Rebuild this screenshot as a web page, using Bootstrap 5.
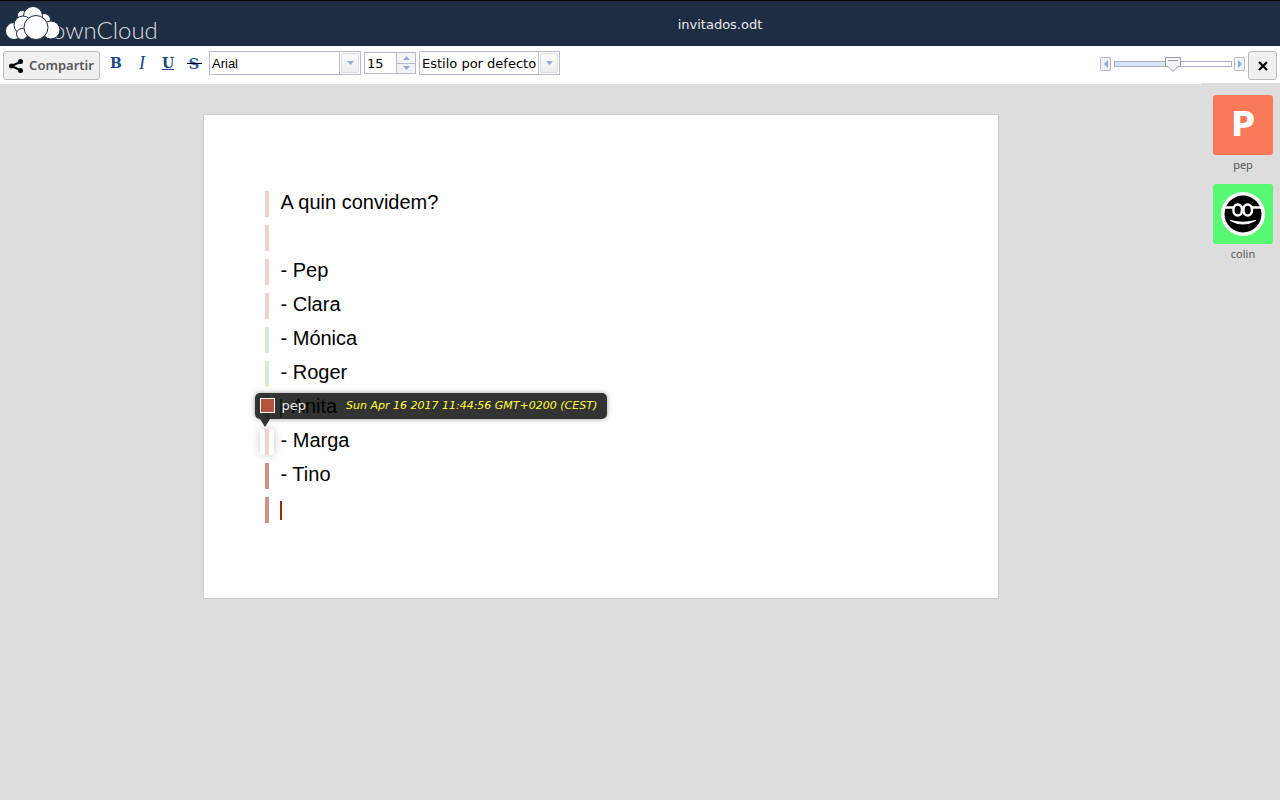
<!DOCTYPE html>
<html lang="es">
<head>
<meta charset="utf-8">
<meta name="viewport" content="width=device-width, initial-scale=1">
<title>invitados.odt</title>
<link href="https://cdn.jsdelivr.net/npm/bootstrap@5.3.0/dist/css/bootstrap.min.css" rel="stylesheet">
<style>
  body { background: #ddd; font-family: "DejaVu Sans", sans-serif; font-size: 13px; color: #000; }
  .topbar { height: 46px; background: #1d2d44; border-top: 1px solid #000; }
  .topbar .brand { width: 200px; padding-left: 4px; }
  .topbar .doc-name { color: #fff; opacity: .9; padding: 2px 40px 0 0; }
  .toolbar { height: 38px; background: #fff; padding: 5px 3px 0; }
  .tool-btn { width: 97px; height: 29px; background: #f0f0f0; border: 1px solid #bbb; border-radius: 3px; color: #555; font: 600 13px/27px "Noto Sans", "Open Sans", sans-serif; padding: 0; display: flex; align-items: center; justify-content: center; gap: 6px; }
  .close-btn { width: 29px; }
  .marks { gap: 2px; margin: 0 3px 0 4px; }
  .mark-btn { width: 24px; height: 24px; padding: 0; border: 0; background: none; color: #1b4587; font: bold 14px/24px "DejaVu Serif", serif; }
  .mark-btn.slanted { font: italic 18px/24px "Liberation Serif", serif; }
  .field { height: 24px; border: 1px solid #b5bcd0; background: #fff; display: flex; position: relative; }
  .field select, .field input { appearance: none; border: 0; background: transparent; padding: 0 2px; width: 100%; height: 22px; font-size: 13px; color: #000; outline: 0; }
  .field input::-webkit-inner-spin-button { display: none; }
  .arrow-box { position: absolute; right: 0; top: 0; bottom: 0; width: 21px; border-left: 1px solid #b5bcd0; padding: 1px; pointer-events: none; }
  .arrow-face { display: flex; width: 100%; height: 100%; align-items: center; justify-content: center; background: linear-gradient(#fafafa, #eee); border: 1px solid #ddd; border-radius: 2px; }
  .font-field { width: 152px; } .font-field select { font-family: "Liberation Sans", sans-serif; padding-top: 2px; }
  .size-field { width: 52px; height: 22px; margin: 1px 3px 0; }
  .size-field input { height: 20px; width: 31px; }
  .style-field { width: 141px; } .style-field select { padding-top: 2px; }
  .spin { width: 20px; border-left: 1px solid #b5bcd0; }
  .spin button { flex: 1; border: 0; padding: 0; background: #f3f3f5; display: flex; align-items: center; justify-content: center; }
  .spin button + button { border-top: 1px solid #b5bcd0; }
  .step-btn { width: 11px; height: 14px; border: 1px solid #b5bcc7; border-radius: 1px; background: #edf1f8; padding: 0; display: flex; align-items: center; justify-content: center; }
  .zoom { height: 16px; margin: 5px 3px 0 0; }
  .zoom input { appearance: none; width: 118px; height: 16px; margin: 0 2px 0 3px; background: transparent; outline: 0; }
  .zoom input::-webkit-slider-runnable-track { height: 6px; border: 1px solid #a9b0c6; background: linear-gradient(90deg, #d5e6f7 50%, #fff 50%); }
  .zoom input::-webkit-slider-thumb { appearance: none; width: 16px; height: 16px; margin-top: -5px; background: url("data:image/svg+xml,%3Csvg xmlns='http://www.w3.org/2000/svg' width='16' height='16'%3E%3Cpath d='M.5.5h15v9h-2.500L8 14.500 3 9.500H.5z' fill='%23f4f5f7' stroke='%23979ba8'/%3E%3Cpath d='M3 3.500h10' stroke='%23979ba8'/%3E%3C/svg%3E"); }
  .stage { padding: 30px 16px; }
  .sheet { width: 100%; max-width: 796px; background: #fefefe; border: 1px solid #ccc; padding: 76px 61px 75px; }
  .line { position: relative; display: flex; min-height: 26px; margin: 0 0 8px; padding-bottom: 3px; border-left: 4px solid #ead4cc; padding-left: 12px; font: 20px/23px "Liberation Sans", sans-serif; }
  .line:last-child { margin: 0; }
  .line.by-colin { border-color: #dcebcd; }
  .line.fresh { border-color: #ce9385; }
  .line.hovered::before { content: ""; position: absolute; left: -9px; top: 0; width: 14px; height: 26px; background: linear-gradient(90deg, #fff 5px, #ead4cc 5px 9px, #fff 9px); box-shadow: 0 0 8px #ccc; }
  .caret { width: 2px; height: 19px; margin: 4px 0 0 -1px; background: #98280f; }
  .caret.remote { position: absolute; left: 12px; background: #5cbe4a; }
  .tip { position: absolute; z-index: 2; left: -14px; bottom: 36px; width: 352px; height: 26px; padding: 0 5px 1px; border-radius: 5px; background: rgba(0,0,0,.8); box-shadow: 0 0 5px #999; display: flex; align-items: center; white-space: nowrap; font: 13px/24px "DejaVu Sans", sans-serif; color: #e6e6e6; }
  .tip::after { content: ""; position: absolute; left: 5px; top: 100%; border: solid transparent; border-width: 8px 5px 0; border-top-color: #333; }
  .tip .swatch { width: 15px; height: 15px; border: 1px solid #fff; background: #b4543c; margin-right: 7px; }
  .tip time { color: #ff3; font-size: 11px; font-style: italic; margin-left: 40px; }
  .members { width: 79px; margin-top: -1px; background: #ddd; padding: 12px 7px 0 12px; }
  .member { margin-bottom: 9px; text-align: center; color: #555; font: 11px/20px "Noto Sans", "Open Sans", sans-serif; }
  .avatar { height: 60px; border-radius: 3px; color: #fff; font: bold 33px/60px "DejaVu Sans", sans-serif; }
  .avatar svg { display: block; }
</style>
</head>
<body>
<header class="topbar d-flex align-items-center">
  <a href="#" class="brand d-block" aria-label="ownCloud">
    <svg width="160" height="45" viewBox="4 1 160 45" style="display:block">
      <text x="52" y="39" font-family="Lato" font-weight="300" font-size="24" fill="#fff" fill-opacity=".85">ownCloud</text>
      <g fill="#fff" stroke="#1d2d44" stroke-width="1">
        <circle cx="22" cy="15" r="4.500"/><circle cx="44" cy="20" r="6.500"/><circle cx="33" cy="16" r="9.500"/>
        <circle cx="14" cy="31" r="8.500"/><circle cx="23" cy="25" r="9"/><circle cx="22" cy="34" r="5.500"/>
        <circle cx="51" cy="30" r="9"/><circle cx="36" cy="27.500" r="12"/>
      </g>
    </svg>
  </a>
  <div class="doc-name flex-grow-1 text-center">invitados.odt</div>
</header>

<nav class="toolbar d-flex align-items-start" aria-label="Formato">
  <button type="button" class="tool-btn">
    <svg width="14" height="14" viewBox="0 0 14 14"><path d="M12 2.500 2.500 7 12 11.500" fill="none" stroke="#000" stroke-width="2"/><circle cx="11.500" cy="2.500" r="2.500"/><circle cx="2.500" cy="7" r="2.500"/><circle cx="11.500" cy="11.500" r="2.500"/></svg>
    Compartir
  </button>
  <div class="marks d-flex">
    <button type="button" class="mark-btn" aria-label="Negrita">B</button>
    <button type="button" class="mark-btn slanted" aria-label="Cursiva">I</button>
    <button type="button" class="mark-btn text-decoration-underline" aria-label="Subrayado">U</button>
    <button type="button" class="mark-btn" aria-label="Tachado"><svg class="d-block" width="24" height="24"><text x="12" y="18" text-anchor="middle" fill="#2d5a9e" font-size="15">S</text><path d="M5 12.500h15" stroke="#000"/></svg></button>
  </div>
  <div class="field font-field">
    <select aria-label="Fuente"><option>Arial</option></select>
    <span class="arrow-box"><span class="arrow-face"><svg width="7" height="4"><path d="M0 0h7L3.500 4z" fill="#96abd8"/></svg></span></span>
  </div>
  <div class="field size-field">
    <input type="number" value="15" aria-label="Tamaño">
    <span class="spin d-flex flex-column">
      <button type="button" aria-label="Aumentar"><svg width="7" height="4"><path d="M0 4h7L3.500 0z" fill="#96abd8"/></svg></button>
      <button type="button" aria-label="Reducir"><svg width="7" height="4"><path d="M0 0h7L3.500 4z" fill="#96abd8"/></svg></button>
    </span>
  </div>
  <div class="field style-field">
    <select aria-label="Estilo"><option>Estilo por defecto</option></select>
    <span class="arrow-box"><span class="arrow-face"><svg width="7" height="4"><path d="M0 0h7L3.500 4z" fill="#96abd8"/></svg></span></span>
  </div>
  <div class="zoom d-flex align-items-center ms-auto">
    <button type="button" class="step-btn" aria-label="Alejar"><svg width="4" height="8"><path d="M4 0v8L0 4z" fill="#8fa9d8"/></svg></button>
    <input type="range" value="50" aria-label="Zoom">
    <button type="button" class="step-btn" aria-label="Acercar"><svg width="4" height="8"><path d="M0 0v8L4 4z" fill="#8fa9d8"/></svg></button>
  </div>
  <button type="button" class="tool-btn close-btn" aria-label="Cerrar"><svg width="10" height="10"><path d="m1 1 8 8M9 1 1 9" stroke="#000" stroke-width="2.200"/></svg></button>
</nav>

<div class="d-flex">
  <main class="stage flex-grow-1 d-flex justify-content-center">
    <article class="sheet">
      <p class="line">A quin convidem?</p>
      <p class="line"></p>
      <p class="line">- Pep</p>
      <p class="line">- Clara</p>
      <p class="line by-colin">- Mónica</p>
      <p class="line by-colin">- Roger</p>
      <p class="line"><span class="caret remote"></span>- Anita</p>
      <div class="line hovered">- Marga
        <div class="tip" role="tooltip"><span class="swatch"></span>pep<time>Sun Apr 16 2017 11:44:56 GMT+0200 (CEST)</time></div>
      </div>
      <p class="line fresh">- Tino</p>
      <p class="line fresh"><span class="caret"></span></p>
    </article>
  </main>
  <aside class="members">
    <div class="member"><div class="avatar" style="background:#f97858">P</div>pep</div>
    <div class="member"><div class="avatar" style="background:#56f971">
      <svg width="60" height="60" viewBox="0 0 60 60">
        <circle cx="30" cy="30" r="22" fill="#fff"/><circle cx="30" cy="30" r="18.500" fill="#000"/>
        <path d="M10 23.500h40" stroke="#fff" stroke-width="2.500"/>
        <g fill="#000" stroke="#fff" stroke-width="2.500"><ellipse cx="24.700" cy="26" rx="4.300" ry="5.500"/><ellipse cx="34.700" cy="26" rx="4.300" ry="5.500"/></g>
        <path d="M17.500 36.500q12.500 3.500 25 0q-12.500 7-25 0z" fill="#fff" stroke="#fff" stroke-width="1.200" stroke-linejoin="round"/>
      </svg></div>colin</div>
  </aside>
</div>
<script src="https://cdn.jsdelivr.net/npm/bootstrap@5.3.0/dist/js/bootstrap.bundle.min.js"></script>
</body>
</html>
